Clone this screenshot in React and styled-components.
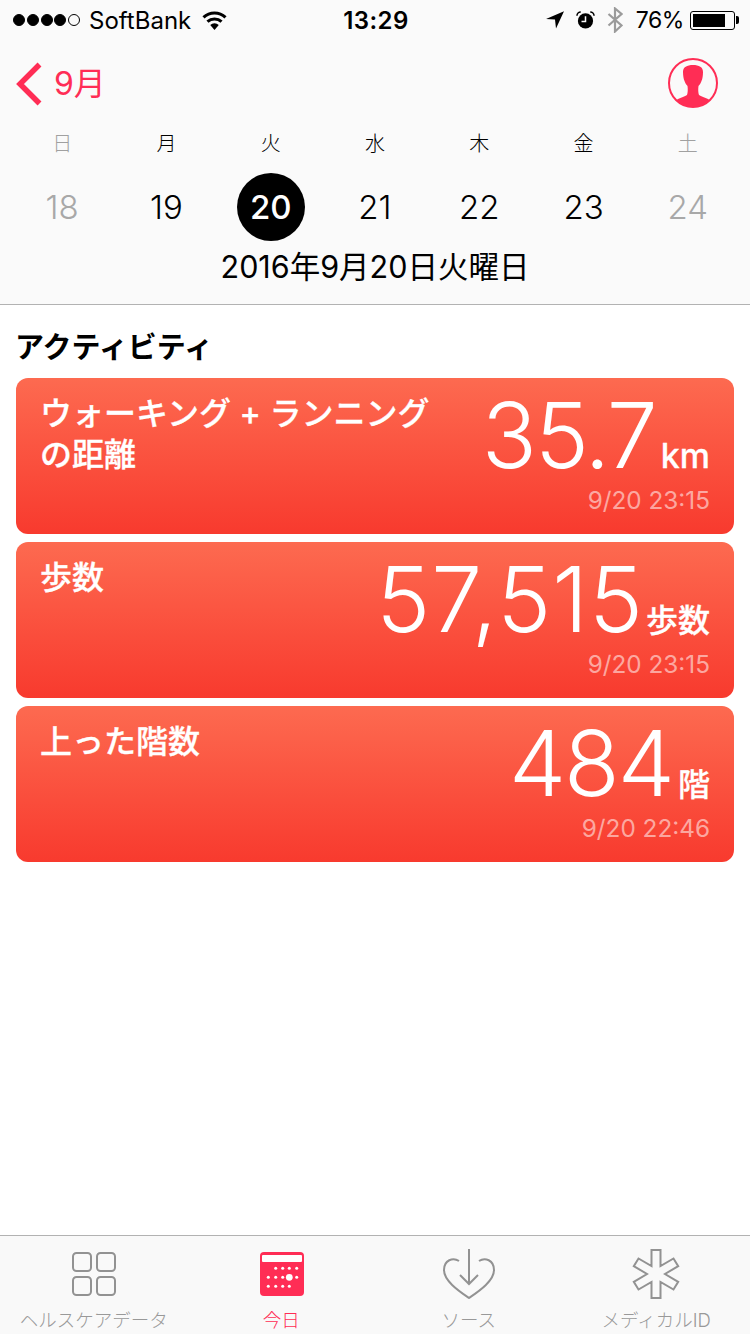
import React from "react";
import styled, { createGlobalStyle } from "styled-components";

const GlobalStyle = createGlobalStyle`
  html, body {
    margin: 0;
    padding: 0;
    background: #fff;
  }
  body {
    font-family: Inter, "Noto Sans CJK JP", sans-serif;
  }
  * {
    box-sizing: border-box;
  }
`;

const PINK = "#ff2d55";
const GRAY = "#929292";

const week = [
  { label: "日", day: 18, off: true },
  { label: "月", day: 19 },
  { label: "火", day: 20, selected: true },
  { label: "水", day: 21 },
  { label: "木", day: 22 },
  { label: "金", day: 23 },
  { label: "土", day: 24, off: true },
];

const cards = [
  { title: "ウォーキング + ランニング\nの距離", value: "35.7", unit: "km", unitSize: 34, time: "9/20 23:15", tracking: -2 },
  { title: "歩数", value: "57,515", unit: "歩数", unitSize: 32, time: "9/20 23:15", tracking: 1 },
  { title: "上った階数", value: "484", unit: "階", unitSize: 32, time: "9/20 22:46", tracking: -2 },
];

function Wifi() {
  return (
    <svg width="25" height="19" viewBox="0 0 26 20">
      <path d="M13 20l-4.500-5.200a6.500 6.500 0 0 1 9 0z" fill="#000" />
      <path d="M5.600 11.200a11 11 0 0 1 14.800 0" fill="none" stroke="#000" strokeWidth="3.200" />
      <path d="M1.400 6.600a17 17 0 0 1 23.200 0" fill="none" stroke="#000" strokeWidth="3.200" />
    </svg>
  );
}

function Location() {
  return (
    <svg width="18" height="18" viewBox="0 0 18 18">
      <path d="M18 .3L10 17.500 9 8.600 0 8z" fill="#000" />
    </svg>
  );
}

function Alarm() {
  return (
    <svg width="19" height="20" viewBox="0 0 20 20">
      <circle cx="10" cy="11" r="8" fill="#000" />
      <path d="M10 6v5.600H5.800" fill="none" stroke="#fafafa" strokeWidth="1.600" />
      <path d="M1 5.500A4 4 0 0 1 5 1.600M19 5.500A4 4 0 0 0 15 1.600" fill="none" stroke="#000" strokeWidth="1.600" />
    </svg>
  );
}

function Bluetooth() {
  return (
    <svg width="16" height="26" viewBox="0 0 16 26">
      <path d="M1.500 7l13 11.500L8 24.500V1.500L14.500 7 1.500 18.500" fill="none" stroke="#9b9b9b" strokeWidth="2.200" />
    </svg>
  );
}

function Profile() {
  return (
    <svg width="50" height="50" viewBox="0 0 50 50">
      <defs>
        <clipPath id="profileClip">
          <circle cx="25" cy="25" r="24" />
        </clipPath>
      </defs>
      <circle cx="25" cy="25" r="24" fill="none" stroke={PINK} strokeWidth="2" />
      <path
        clipPath="url(#profileClip)"
        d="M25 7c-6 0-10 2-10 7 0 3 .5 7 1.500 9 .7 2 2 4 3 5 .5 3 .3 7-.5 9-2 1.500-6 2.500-9 4-2 1-3 3-3 8h36c0-5-1-7-3-8-3-1.500-7-2.500-9-4-.8-2-1-6-.5-9 1-1 2.300-3 3-5 1-2 1.500-6 1.500-9 0-5-4-7-10-7z"
        fill={PINK}
      />
    </svg>
  );
}

function GridIcon() {
  return (
    <svg width="44" height="44" viewBox="0 0 44 44">
      {[
        [1, 1],
        [25, 1],
        [1, 25],
        [25, 25],
      ].map(([x, y]) => (
        <rect key={`${x}-${y}`} x={x} y={y} width="18" height="18" rx="3.500" fill="none" stroke={GRAY} strokeWidth="2" />
      ))}
    </svg>
  );
}

function TodayIcon() {
  const rows = [
    [15.700, 22.700, 29.300, 36.700],
    [8.300, 15.700, 22.700, 36.700],
    [8.300, 15.700, 22.700, 29.300],
  ];
  return (
    <svg width="44" height="44" viewBox="0 0 44 44">
      <rect width="44" height="44" rx="4" fill={PINK} />
      <rect x="2" y="3" width="40" height="7" rx="1" fill="#fff" />
      {rows.map((row, r) =>
        row.map((x) => <circle key={`${r}-${x}`} cx={x} cy={16.300 + r * 9} r="1.500" fill="#fff" />)
      )}
      <circle cx="29.300" cy="25.300" r="3.400" fill="#fff" />
    </svg>
  );
}

function SourcesIcon() {
  return (
    <svg width="52" height="50" viewBox="0 0 52 50" fill="none" stroke={GRAY} strokeWidth="2">
      <path d="M16 12C10 8 1 11 1 21c0 11 15 21 25 28 10-7 25-17 25-28C51 11 42 8 36 12" />
      <path d="M26 0v35M17 26l9 9 9-9" />
    </svg>
  );
}

function MedicalIcon() {
  return (
    <svg width="48" height="50" viewBox="0 0 48 50" fill="none" stroke={GRAY} strokeWidth="2">
      <path d="M19.500 1h9v16l13-7.500 4.700 7.600L33 25l13.200 7.900-4.700 7.600-13-7.500v16h-9V33l-13 7.500-4.700-7.600L15 25 1.800 17.100l4.700-7.600 13 7.500z" />
    </svg>
  );
}

const tabs = [
  { label: "ヘルスケアデータ", icon: <GridIcon /> },
  { label: "今日", icon: <TodayIcon />, active: true },
  { label: "ソース", icon: <SourcesIcon /> },
  { label: "メディカルID", icon: <MedicalIcon /> },
];

export default function App() {
  return (
    <Page>
      <GlobalStyle />
      <TopPanel>
        <StatusBar>
          <StatusLeft>
            <Signal>
              {[1, 2, 3, 4].map((n) => (
                <SignalDot key={n} $filled />
              ))}
              <SignalDot />
            </Signal>
            <span>SoftBank</span>
            <WifiSlot>
              <Wifi />
            </WifiSlot>
          </StatusLeft>
          <Clock>13:29</Clock>
          <StatusRight>
            <Location />
            <Alarm />
            <Bluetooth />
            <Percent>76%</Percent>
            <Battery>
              <BatteryLevel />
            </Battery>
            <BatteryCap />
          </StatusRight>
        </StatusBar>
        <NavRow>
          <BackLink>
            <svg width="28" height="44" viewBox="0 0 28 44">
              <path d="M23.500 2.500L4 22l19.500 19.500" fill="none" stroke={PINK} strokeWidth="5.500" />
            </svg>
            <BackText>9月</BackText>
          </BackLink>
          <ProfileSlot>
            <Profile />
          </ProfileSlot>
        </NavRow>
        <WeekGrid>
          {week.map((d) => (
            <DayColumn key={d.day}>
              <Weekday $off={d.off}>{d.label}</Weekday>
              <DayNumber $off={d.off} $selected={d.selected}>
                {d.day}
              </DayNumber>
            </DayColumn>
          ))}
        </WeekGrid>
        <FullDate>2016年9月20日火曜日</FullDate>
      </TopPanel>
      <Content>
        <SectionTitle>アクティビティ</SectionTitle>
        <CardList>
          {cards.map((c) => (
            <Card key={c.title}>
              <CardTitle>{c.title}</CardTitle>
              <CardRight>
                <ValueRow>
                  <Value $tracking={c.tracking}>{c.value}</Value>
                  <Unit $size={c.unitSize}>{c.unit}</Unit>
                </ValueRow>
                <Time>{c.time}</Time>
              </CardRight>
            </Card>
          ))}
        </CardList>
      </Content>
      <TabBar>
        {tabs.map((t) => (
          <Tab key={t.label} $active={t.active}>
            <TabIcon $active={t.active}>{t.icon}</TabIcon>
            <TabLabel>{t.label}</TabLabel>
          </Tab>
        ))}
      </TabBar>
    </Page>
  );
}

const Page = styled.div`
  width: 750px;
  height: 1334px;
  display: flex;
  flex-direction: column;
  overflow: hidden;
  background: #fff;
`;

const TopPanel = styled.header`
  height: 305px;
  background: #fafafa;
  border-bottom: 1px solid #b2b2b2;
`;

const StatusBar = styled.div`
  height: 40px;
  padding: 0 11px 0 13px;
  display: grid;
  grid-template-columns: 1fr auto 1fr;
  align-items: center;
  font-size: 24px;
  color: #000;
`;

const StatusLeft = styled.div`
  display: flex;
  align-items: center;
  gap: 9px;
`;

const WifiSlot = styled.div`
  display: flex;
  margin-left: 2px;
`;

const Signal = styled.div`
  display: flex;
  gap: 1.750px;
`;

const SignalDot = styled.i`
  width: 12px;
  height: 12px;
  border-radius: 50%;
  border: 1px solid #000;
  background: ${({ $filled }) => ($filled ? "#000" : "transparent")};
`;

const Clock = styled.div`
  font-weight: 600;
  font-size: 24px;
  letter-spacing: 0.4px;
`;

const StatusRight = styled.div`
  display: flex;
  align-items: center;
  justify-content: flex-end;
  gap: 12px;
`;

const Percent = styled.span`
  margin-left: 1px;
  font-size: 23px;
  letter-spacing: -0.4px;
`;

const Battery = styled.div`
  width: 45px;
  height: 19px;
  margin-left: -6px;
  padding: 2px;
  border: 1px solid #000;
  border-radius: 3px;
`;

const BatteryLevel = styled.div`
  width: 81%;
  height: 100%;
  background: #000;
`;

const BatteryCap = styled.div`
  width: 3px;
  height: 8px;
  margin-left: -11px;
  background: #000;
  border-radius: 0 2px 2px 0;
`;

const NavRow = styled.div`
  height: 88px;
  padding: 0 32px 0 16px;
  display: flex;
  align-items: center;
  justify-content: space-between;
`;

const BackLink = styled.div`
  display: flex;
  align-items: center;
  gap: 10px;
  color: ${PINK};
  font-size: 32px;
`;

const BackText = styled.span`
  padding-bottom: 6px;
`;

const ProfileSlot = styled.div`
  display: flex;
  padding-bottom: 2px;
`;

const WeekGrid = styled.div`
  padding: 0 10px;
  display: grid;
  grid-template-columns: repeat(7, 1fr);
`;

const DayColumn = styled.div`
  display: flex;
  flex-direction: column;
  align-items: center;
`;

const Weekday = styled.div`
  height: 32px;
  line-height: 32px;
  font-size: 20px;
  font-weight: 300;
  color: ${({ $off }) => ($off ? "#a0a0a0" : "#000")};
`;

const DayNumber = styled.div`
  width: 68px;
  height: 68px;
  margin-top: 13px;
  display: flex;
  align-items: center;
  justify-content: center;
  border-radius: 50%;
  font-size: 33px;
  font-weight: ${({ $selected }) => ($selected ? 500 : 350)};
  color: ${({ $off, $selected }) => ($selected ? "#fff" : $off ? "#a8a8a8" : "#000")};
  background: ${({ $selected }) => ($selected ? "#000" : "transparent")};
`;

const FullDate = styled.div`
  margin-top: 6px;
  text-align: center;
  font-size: 30.500px;
  line-height: 40px;
  color: #000;
`;

const Content = styled.main`
  flex: 1;
  padding: 0 16px;
`;

const SectionTitle = styled.h2`
  margin: 0 0 0 -1px;
  padding-top: 25px;
  height: 73px;
  font-size: 29px;
  line-height: 36px;
  font-weight: 700;
  color: #000;
`;

const CardList = styled.div`
  display: flex;
  flex-direction: column;
  gap: 8px;
`;

const Card = styled.article`
  height: 156px;
  padding: 15px 24px 0 24px;
  border-radius: 12px;
  display: flex;
  justify-content: space-between;
  color: #fff;
  background: linear-gradient(#fd6a50, #f83a2e);
`;

const CardTitle = styled.div`
  font-size: 32px;
  line-height: 41px;
  font-weight: 500;
  -webkit-text-stroke: 0.3px #fff;
  white-space: pre-line;
`;

const CardRight = styled.div`
  display: flex;
  flex-direction: column;
  align-items: flex-end;
  flex-shrink: 0;
`;

const ValueRow = styled.div`
  display: flex;
  align-items: baseline;
  gap: 5px;
  height: 85px;
  line-height: 85px;
`;

const Value = styled.span`
  font-size: 91px;
  font-weight: 300;
  letter-spacing: ${({ $tracking }) => $tracking}px;
  margin-right: ${({ $tracking }) => -($tracking + 2)}px;
`;

const Unit = styled.span`
  font-size: ${({ $size }) => $size}px;
  font-weight: 500;
  -webkit-text-stroke: 0.3px #fff;
`;

const Time = styled.div`
  margin-top: 6px;
  font-size: 24.300px;
  line-height: 32px;
  color: rgba(255, 255, 255, 0.55);
`;

const TabBar = styled.nav`
  height: 99px;
  background: #f9f9f9;
  border-top: 1px solid #b2b2b2;
  display: grid;
  grid-template-columns: repeat(4, 1fr);
`;

const Tab = styled.div`
  display: flex;
  flex-direction: column;
  align-items: center;
  color: ${({ $active }) => ($active ? PINK : "#999")};
`;

const TabIcon = styled.div`
  height: 68px;
  display: flex;
  align-items: center;
  justify-content: center;
  padding-top: 8px;
  margin-left: ${({ $active }) => ($active ? "1px" : "0")};
`;

const TabLabel = styled.div`
  margin-top: 2px;
  font-size: 18.500px;
  font-weight: 300;
  line-height: 28px;
`;
